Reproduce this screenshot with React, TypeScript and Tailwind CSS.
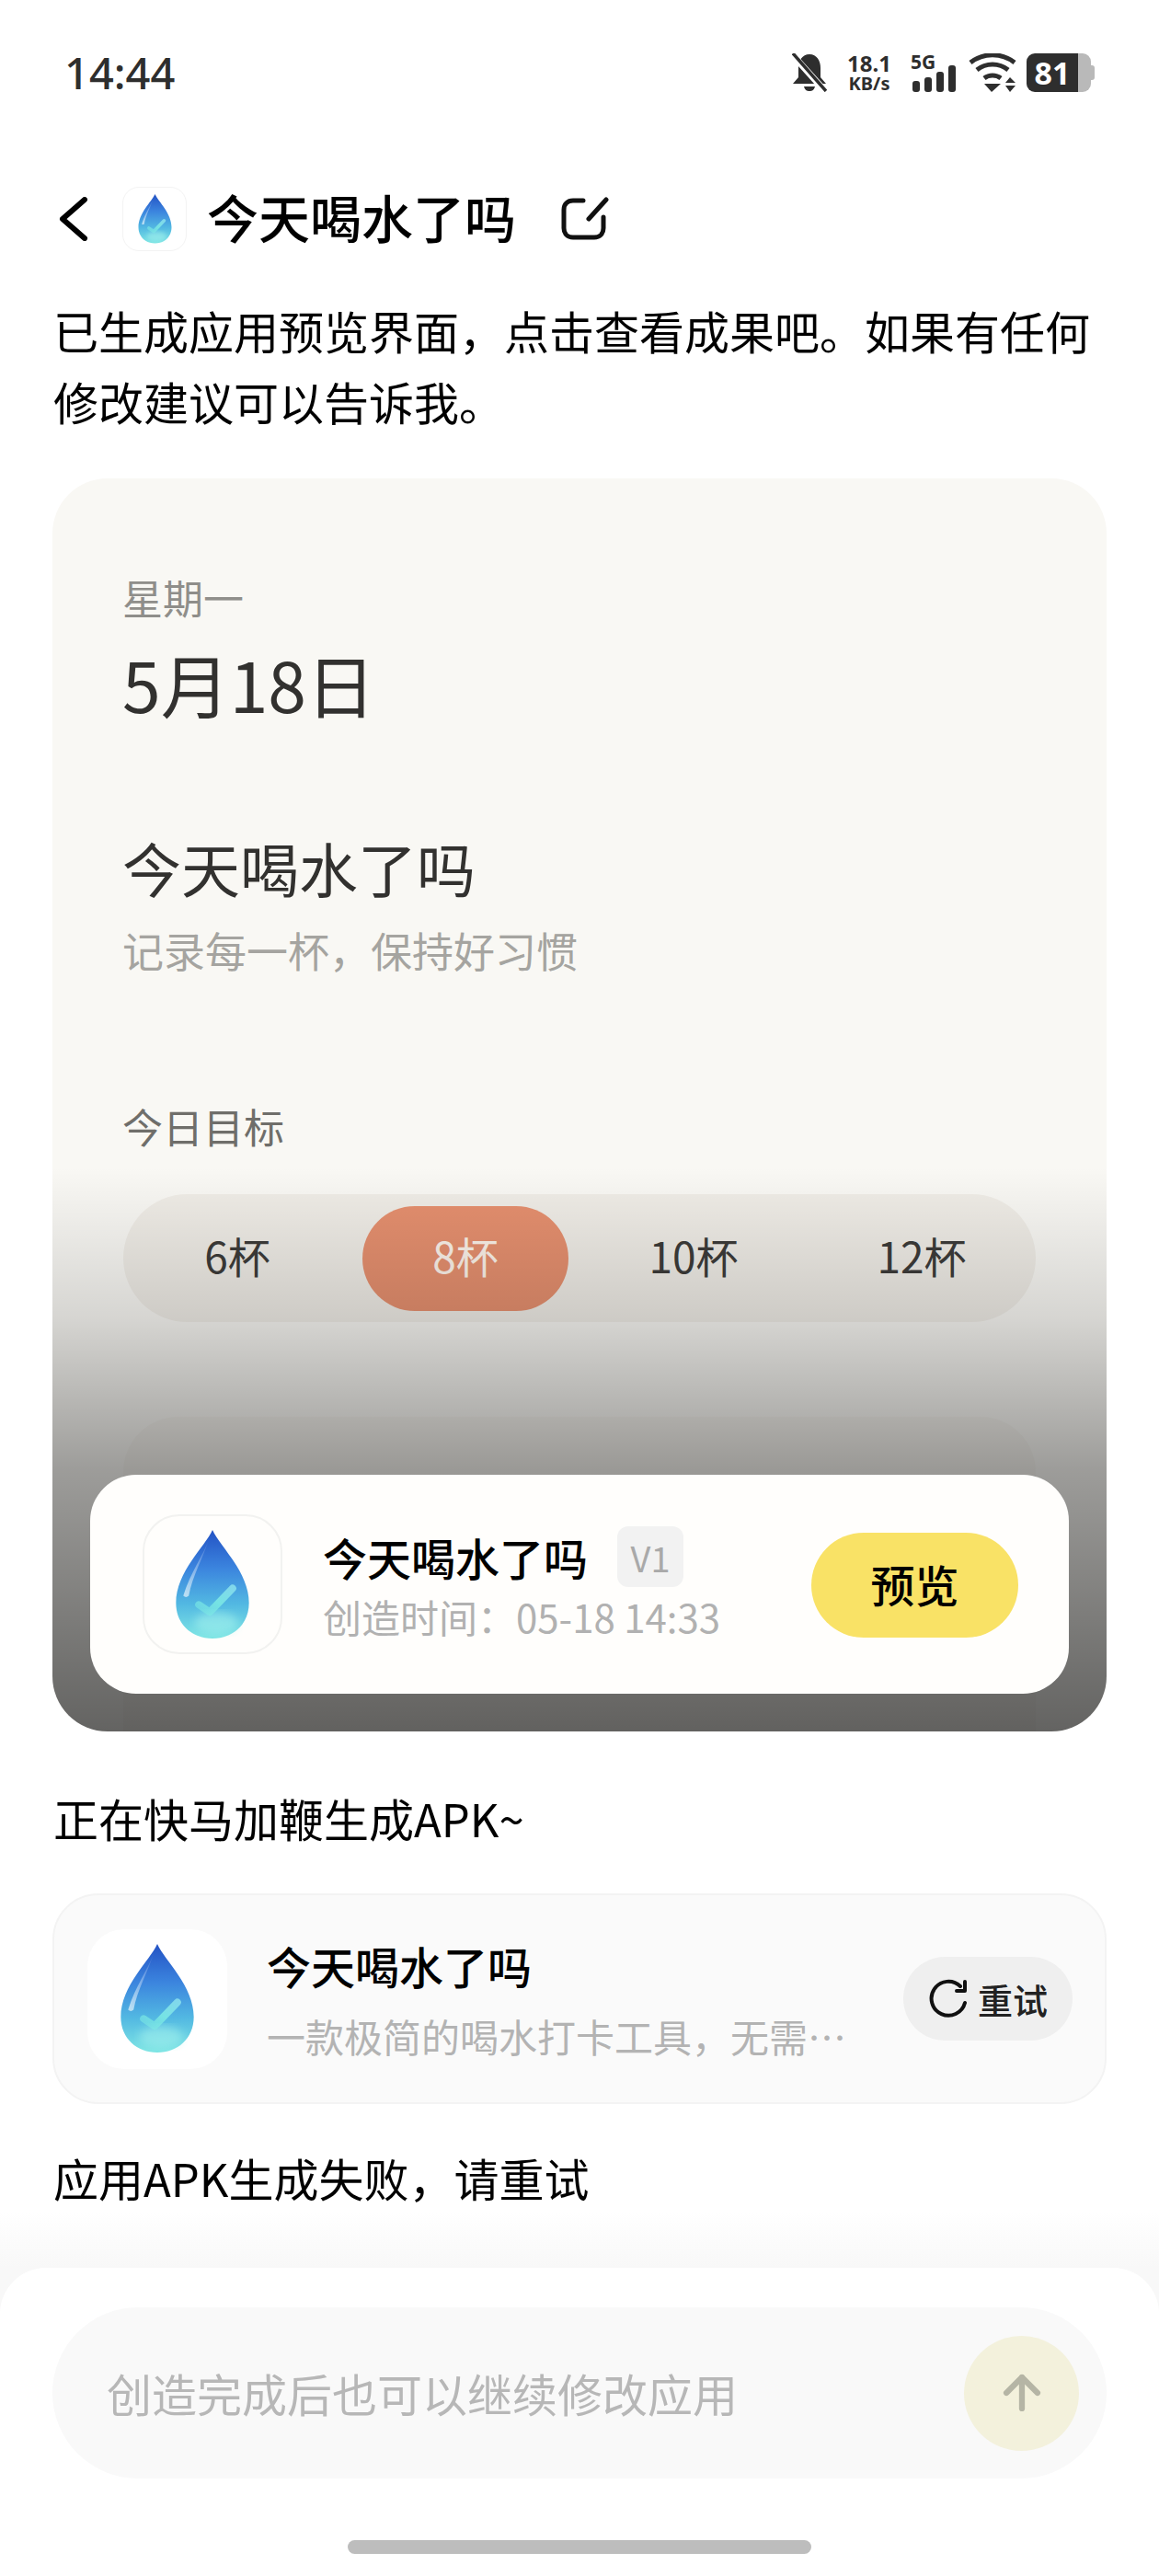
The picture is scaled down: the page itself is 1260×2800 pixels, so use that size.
import { ArrowUp } from "lucide-react"

const FONT = "font-['Noto_Sans_CJK_SC','Noto_Sans',sans-serif]"

// Water drop app icon, the gradient id has to be unique per instance
const Drop = ({ id, className }: { id: string; className: string }) => {
  return (
    <svg viewBox="0 0 80 120" className={className}>
      <defs>
        <linearGradient id={`${id}-body`} x1="0.5" y1="0" x2="0.5" y2="1">
          <stop offset="0" stopColor="#2352c4" />
          <stop offset="0.35" stopColor="#3b84de" />
          <stop offset="0.68" stopColor="#52b8e2" />
          <stop offset="1" stopColor="#7fe6e4" />
        </linearGradient>
        <linearGradient id={`${id}-shine`} x1="0.8" y1="0" x2="0.2" y2="1">
          <stop offset="0" stopColor="#ffffff" stopOpacity="0.1" />
          <stop offset="1" stopColor="#ffffff" stopOpacity="0.6" />
        </linearGradient>
        <linearGradient id={`${id}-tick`} x1="0" y1="1" x2="1" y2="0">
          <stop offset="0" stopColor="#7debe4" stopOpacity="0.5" />
          <stop offset="0.5" stopColor="#7debe4" stopOpacity="0.85" />
          <stop offset="1" stopColor="#8fe6ee" stopOpacity="0.8" />
        </linearGradient>
        <filter id={`${id}-soft`}>
          <feGaussianBlur stdDeviation="5" />
        </filter>
      </defs>
      <path
        d="M40 0C48 18 80 46 80 80C80 104 62 119 40 119C18 119 0 104 0 80C0 46 32 18 40 0Z"
        fill={`url(#${id}-body)`}
      />
      <ellipse cx="44" cy="102" rx="24" ry="12" fill="#a5f3ee" opacity="0.55" filter={`url(#${id}-soft)`} />
      <path d="M36 10C30 28 16 46 8 72C10 74 12 74 14 72C18 50 30 30 36 10Z" fill={`url(#${id}-shine)`} />
      <path
        d="M25 82L37 90L62 64"
        fill="none"
        stroke={`url(#${id}-tick)`}
        strokeWidth="8"
        strokeLinecap="round"
        strokeLinejoin="round"
      />
    </svg>
  )
}

const StatusBar = () => {
  return (
    <div className="flex h-[42px] items-center justify-between pl-[70px] pr-[70px] text-[#2e2e2e]">
      <span className="text-[47px] leading-[42px] font-medium font-['Noto_Sans',sans-serif]">14:44</span>
      <div className="flex items-center">
        {/* muted bell */}
        <svg viewBox="0 0 38 42" className="h-[42px] w-[38px]" fill="#2e2e2e">
          <path d="M19 1C27 1 31 8 31 16V26L37 33H1L7 26V16C7 8 11 1 19 1Z" />
          <path d="M13 36H25C24 40 22 41 19 41C16 41 14 40 13 36Z" />
          <path d="M1 2L36 41" stroke="#ffffff" strokeWidth="7" />
          <path d="M1 0L37 41" stroke="#2e2e2e" strokeWidth="3.5" />
        </svg>
        <div className="ml-[21px] flex w-[50px] flex-col items-center font-['Noto_Sans',sans-serif] font-bold">
          <span className="text-[24px] leading-[24px]">18.1</span>
          <span className="text-[20px] leading-[20px]">KB/s</span>
        </div>
        <div className="relative ml-[20px] h-[42px] w-[49px]">
          <span className="absolute top-[-3px] left-0 text-[21px] leading-[24px] font-bold font-['Noto_Sans',sans-serif]">
            5G
          </span>
          {/* signal bars */}
          <svg viewBox="0 0 49 42" className="h-[42px] w-[49px]" fill="#2e2e2e">
            <rect x="2" y="30" width="8" height="12" rx="3" />
            <rect x="15" y="26" width="8" height="16" rx="3" />
            <rect x="28" y="20" width="8" height="22" rx="3" />
            <rect x="41" y="13" width="8" height="29" rx="3" />
          </svg>
        </div>
        {/* wifi with up/down arrows */}
        <svg viewBox="0 0 52 42" className="ml-[14px] h-[42px] w-[52px]">
          <g fill="none" stroke="#2e2e2e" strokeWidth="5">
            <path d="M2 10C16 -1 36 -1 50 10" />
            <path d="M9 18C19 10 33 10 43 18" />
            <path d="M17 27C22 23 30 23 35 27" />
          </g>
          <path d="M17 33H35L25 42Z" fill="#2e2e2e" />
          <path d="M40 32L45 26L51 32Z M40 35H51L45 42Z" fill="#2e2e2e" />
        </svg>
        {/* battery */}
        <div className="ml-[11px] flex h-[42px] items-center">
          <div className="flex h-[42px] w-[56px] items-center justify-center rounded-l-[9px] bg-[#2e2e2e]">
            <span className="text-[34px] leading-none font-bold text-white font-['Noto_Sans',sans-serif]">81</span>
          </div>
          <div className="h-[42px] w-[14px] rounded-r-[9px] bg-[#b9b9b9]" />
          <div className="h-[16px] w-[4px] rounded-r-[3px] bg-[#b9b9b9]" />
        </div>
      </div>
    </div>
  )
}

const Header = () => {
  return (
    <div className="mt-[103px] flex h-[70px] items-center pl-[64px]">
      {/* back chevron */}
      <svg viewBox="0 0 32 48" className="h-[48px] w-[32px]" fill="none" stroke="#000" strokeWidth="6" strokeLinecap="round" strokeLinejoin="round">
        <path d="M28 3L4 24L28 45" />
      </svg>
      <div className="ml-[37px] flex h-[70px] w-[70px] items-center justify-center rounded-[18px] border border-[#f3f3f3]">
        <Drop id="head" className="h-[54px] w-[37px]" />
      </div>
      <h1 className="mb-[6px] ml-[22px] text-[56px] leading-[70px] font-medium text-black">今天喝水了吗</h1>
      {/* edit */}
      <svg viewBox="0 0 52 48" className="ml-[49px] h-[48px] w-[52px]" fill="none" stroke="#111" strokeWidth="5" strokeLinecap="round">
        <path d="M24 4H13C7 4 3 8 3 14V34C3 40 7 44 13 44H36C42 44 46 40 46 34V22" />
        <path d="M49 3L30 24" />
      </svg>
    </div>
  )
}

const GoalPicker = () => {
  const options = ["6杯", "8杯", "10杯", "12杯"]
  return (
    <div className="mt-[44px] flex h-[139px] items-center gap-6 rounded-[70px] bg-[#f0ede7] px-3">
      {options.map((item) => (
        <div
          key={item}
          className={
            item === "8杯"
              ? "flex h-[114px] w-[224px] items-center justify-center rounded-[57px] bg-[#e6906f] pb-[6px] text-[46px] text-[#fdf3ea]"
              : "flex h-[114px] w-[224px] items-center justify-center pb-[6px] text-[46px] text-[#3d3c3a]"
          }
        >
          {item}
        </div>
      ))}
    </div>
  )
}

const PreviewBar = () => {
  return (
    <div className="absolute top-[1083px] left-[41px] flex h-[238px] w-[1064px] items-center rounded-[50px] bg-[#fffefc] pl-[57px]">
      <div className="flex h-[152px] w-[152px] shrink-0 items-center justify-center rounded-[40px] border-2 border-[#f2f2f0]">
        <Drop id="preview" className="h-[119px] w-[80px]" />
      </div>
      <div className="ml-[44px] flex flex-col">
        <div className="flex items-center">
          <span className="text-[48px] leading-[66px] font-medium text-black">今天喝水了吗</span>
          <span className="ml-[32px] flex h-[66px] w-[72px] items-center justify-center rounded-[12px] bg-[#f2f2f2] text-[38px] text-[#a9a9a9]">
            V1
          </span>
        </div>
        <span className="mt-[4px] text-[42px] leading-[56px] text-[#b1b1b1]">{"创造时间\uFF1A05-18 14:33"}</span>
      </div>
      <button className="absolute top-[63px] left-[784px] flex h-[114px] w-[225px] items-center justify-center rounded-[57px] bg-[#f9e266] pb-[4px] text-[48px] font-medium text-black">
        预览
      </button>
    </div>
  )
}

const PreviewCard = () => {
  return (
    <div className="relative mx-[57px] mt-[44px] h-[1362px] overflow-hidden rounded-[60px] bg-[#f9f8f4] px-[77px] pt-[99px]">
      <div className="-ml-px text-[44px] leading-[60px] text-[#8f8e8a]">星期一</div>
      <div className="mt-[19px] -ml-px text-[75px] leading-[90px] text-[#32312f]">5月18日</div>
      <div className="mt-[114px] -ml-px text-[64px] leading-[80px] text-[#32312f]">今天喝水了吗</div>
      <div className="mt-[21px] -ml-px text-[45px] leading-[60px] text-[#a5a4a0]">{"记录每一杯\uFF0C保持好习惯"}</div>
      <div className="mt-[131px] -ml-px text-[44px] leading-[60px] text-[#6f6e6a]">今日目标</div>
      <GoalPicker />
      <div className="mt-[103px] h-[400px] rounded-[60px] bg-[#f5f3ee]" />
      {/* dark fade over the lower part of the preview */}
      <div className="absolute inset-0 bg-[linear-gradient(to_bottom,rgba(0,0,0,0)_55%,rgba(0,0,0,0.14)_67%,rgba(0,0,0,0.37)_79%,rgba(0,0,0,0.6)_100%)]" />
      <PreviewBar />
    </div>
  )
}

const ApkCard = () => {
  return (
    <div className="mx-[57px] mt-[45px] flex h-[229px] items-center justify-between rounded-[50px] border-2 border-[#f3f3f3] bg-[#fafafa] pr-[35px] pl-[36px]">
      <div className="flex items-center">
        <div className="flex h-[152px] w-[152px] shrink-0 items-center justify-center rounded-[40px] bg-white">
          <Drop id="apk" className="h-[119px] w-[80px]" />
        </div>
        <div className="ml-[43px] flex flex-col">
          <span className="text-[48px] leading-[66px] font-medium text-black">今天喝水了吗</span>
          <span className="mt-[14px] text-[42px] leading-[60px] whitespace-nowrap text-[#b3b3b3]">
            {"一款极简的喝水打卡工具\uFF0C无需…"}
          </span>
        </div>
      </div>
      <button className="flex h-[91px] w-[184px] items-center justify-center gap-[10px] rounded-[46px] bg-[#efefef] text-[38px] font-medium text-[#222]">
        <svg viewBox="0 0 44 44" className="h-[44px] w-[44px]" fill="none" stroke="#111" strokeWidth="4" strokeLinecap="round">
          <path d="M40 26A18.5 18.5 0 1 1 35 8" />
          <path d="M40 3V13H31" strokeLinejoin="round" />
        </svg>
        重试
      </button>
    </div>
  )
}

const Composer = () => {
  return (
    <div className="mt-auto bg-[linear-gradient(to_bottom,#ffffff_0,#f8f8f8_60px)] pt-[60px]">
      <div className="h-[335px] rounded-t-[50px] bg-white px-[57px] pt-[43px]">
        <div className="flex h-[186px] items-center justify-between rounded-[93px] bg-[#f9f9f9] pr-[30px] pl-[59px]">
          <span className="text-[49px] text-[#b7b7b7]">创造完成后也可以继续修改应用</span>
          <button className="flex h-[125px] w-[125px] items-center justify-center rounded-full bg-[#f3f1dc]">
            <ArrowUp className="h-[58px] w-[58px] text-[#b5b5a5]" strokeWidth={2.6} />
          </button>
        </div>
        <div className="mx-auto mt-[67px] h-[15px] w-[504px] rounded-full bg-[#bdbdbd]" />
      </div>
    </div>
  )
}

const App = () => {
  return (
    <div className={`flex h-[2800px] w-[1260px] flex-col overflow-hidden bg-white pt-[58px] ${FONT}`}>
      <StatusBar />
      <Header />
      <p className="mt-[47px] mb-[2px] px-[58px] text-[49px] leading-[77px] text-black">
        {"已生成应用预览界面\uFF0C点击查看成果吧\u3002如果有任何修改建议可以告诉我\u3002"}
      </p>
      <PreviewCard />
      <p className="mt-[59px] mb-[2px] px-[58px] text-[49px] leading-[70px] text-black">正在快马加鞭生成APK~</p>
      <ApkCard />
      <p className="mt-[45px] mb-[2px] px-[58px] text-[49px] leading-[70px] text-black">{"应用APK生成失败\uFF0C请重试"}</p>
      <Composer />
    </div>
  )
}

export default App
